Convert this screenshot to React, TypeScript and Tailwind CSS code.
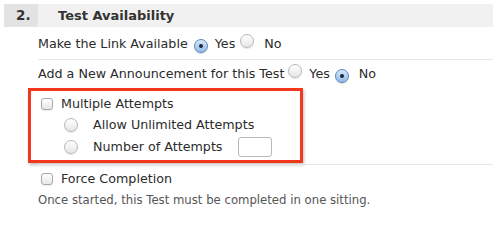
import React from "react";

function Radio({ checked = false }: { checked?: boolean }) {
  return (
    <span
      className={
        "inline-flex items-center justify-center w-[14px] h-[14px] rounded-full border shrink-0 " +
        (checked
          ? "border-[#5f86b8] bg-gradient-to-b from-[#d6e8fb] to-[#8fbbea] shadow-[0_1px_1px_rgba(0,0,0,0.15)]"
          : "border-[#b8b8b8] bg-gradient-to-b from-[#ffffff] to-[#e6e6e6] shadow-[0_1px_1px_rgba(0,0,0,0.1)]")
      }
    >
      {checked && <span className="w-[4px] h-[4px] rounded-full bg-[#1d2733]" />}
    </span>
  );
}

function Checkbox() {
  return (
    <span className="inline-block w-[12px] h-[12px] rounded-[3px] border border-[#a8a8a8] bg-gradient-to-b from-[#ffffff] to-[#e6e6e6] shrink-0 shadow-[0_1px_1px_rgba(0,0,0,0.08)]" />
  );
}

export default function App() {
  return (
    <div
      className="w-[493px] h-[212px] bg-white pt-[4px] pl-[4px] overflow-hidden text-[#2b2b2b]"
      style={{ fontFamily: '"Lucida Grande", "DejaVu Sans", sans-serif' }}
    >
      <div className="flex h-[23px]">
        <div className="w-[34px] bg-[#e3e3e3] flex items-center pl-[12px] text-[13.5px] font-bold text-[#333]">
          2.
        </div>
        <div className="flex-1 bg-[#f1f1f1] flex items-center pl-[20px] text-[13px] font-bold text-[#333]">
          Test Availability
        </div>
      </div>
      <div className="ml-[34px]">
        <div className="h-[33px] flex items-center border-b border-[#e6e6e6] text-[12.7px] pt-[1px]">
          <span>Make the Link Available</span>
          <span className="ml-[6px]"><Radio checked /></span>
          <span className="ml-[7px]">Yes</span>
          <span className="ml-[5px]"><Radio /></span>
          <span className="ml-[10px]">No</span>
        </div>
        <div className="h-[28px] flex items-center text-[12.7px]">
          <span>Add a New Announcement for this Test</span>
          <span className="ml-[4px]"><Radio /></span>
          <span className="ml-[7px]">Yes</span>
          <span className="ml-[5px]"><Radio checked /></span>
          <span className="ml-[10px]">No</span>
        </div>
        <div className="-ml-[10px] w-[275px] h-[75px] border-[3px] border-[#f2371c] shadow-[1px_2px_3px_rgba(0,0,0,0.25)] text-[12.7px] pt-[3px]">
          <div className="flex items-center h-[20px] pl-[10px]">
            <Checkbox />
            <span className="ml-[8px]">Multiple Attempts</span>
          </div>
          <div className="flex items-center h-[21px] pl-[33px]">
            <Radio />
            <span className="ml-[15px]">Allow Unlimited Attempts</span>
          </div>
          <div className="flex items-center h-[23px] pl-[33px]">
            <Radio />
            <span className="ml-[15px]">Number of Attempts</span>
            <span className="ml-[16px] w-[34px] h-[20px] rounded-[3px] border border-[#b8b8b8] bg-white" />
          </div>
        </div>
        <div className="h-px bg-[#e6e6e6] mt-[1px]" />
        <div className="flex items-center h-[24px] pl-[3px] pt-[3px] text-[12.7px]">
          <Checkbox />
          <span className="ml-[8px]">Force Completion</span>
        </div>
        <div className="text-[11.7px] text-[#555] leading-[16px] mt-[3px]">
          Once started, this Test must be completed in one sitting.
        </div>
      </div>
    </div>
  );
}
